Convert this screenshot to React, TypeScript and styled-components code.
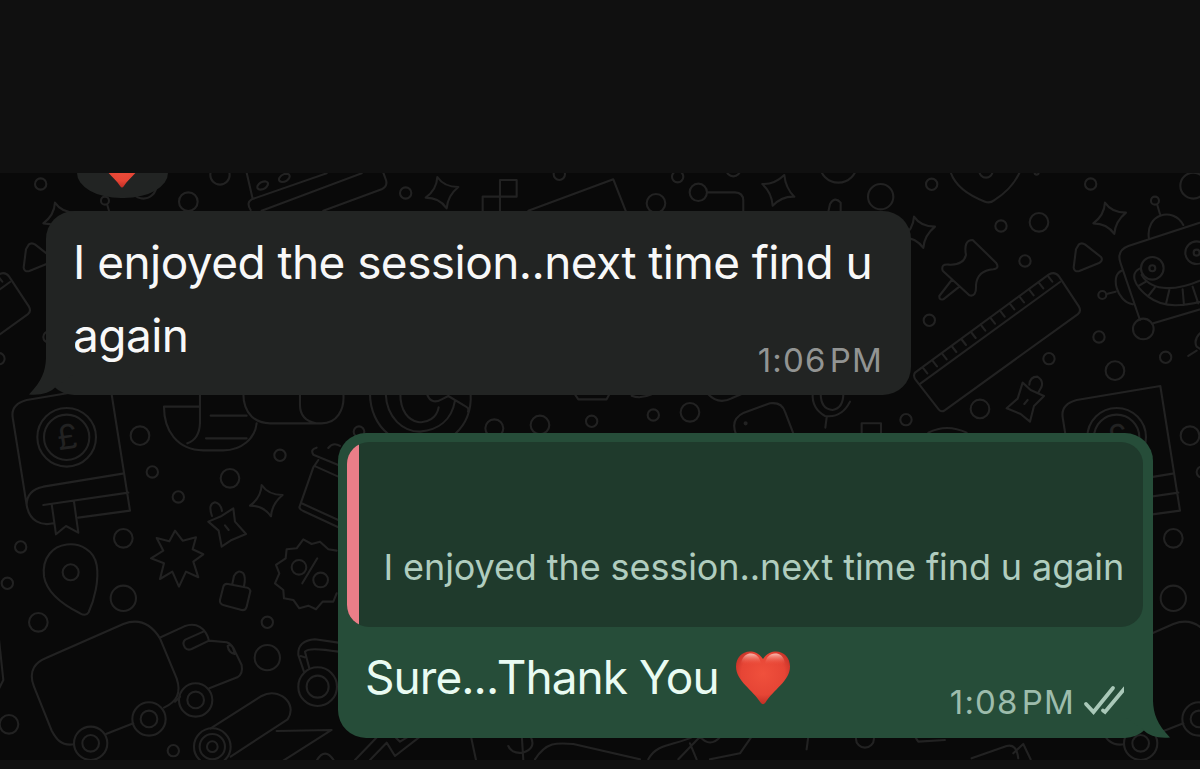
import React from "react";
import styled, { createGlobalStyle } from 'styled-components';

const GlobalStyle = createGlobalStyle`
*{
box-sizing:border-box;
}
body{
margin:0;
background:#101010;
}
`;
const Screen = styled.main`
display:flex;
flex-direction:column;
width:1200px;
height:769px;
overflow:hidden;
background:#101010;
font-family:Inter,"Liberation Sans",sans-serif;
`;
const TopBar = styled.header`
flex:none;
height:173px;
`;
const BottomBar = styled.footer`
flex:none;
height:9px;
background:#111111;
`;
const Chat = styled.section`
position:relative;
flex:1;
display:flex;
flex-direction:column;
overflow:hidden;
background:#090909;
`;
const Wallpaper = styled.svg`
position:absolute;
top:0;
left:0;
fill:none;
stroke:#222222;
stroke-linecap:round;
stroke-linejoin:round;
`;
const Reaction = styled.div`
position:relative;
display:flex;
justify-content:center;
align-items:flex-end;
width:91px;
height:25px;
margin-left:77px;
padding:0 2px 10px 0;
border-radius:0 0 44px 44px / 0 0 25px 25px;
background:#222423;
overflow:hidden;
`;
const Bubble = styled.article<{ mine?: boolean }>`
position:relative;
flex:none;
display:flex;
flex-direction:column;
align-self:${(props) => (props.mine ? 'flex-end' : 'flex-start')};
width:${(props) => (props.mine ? 815 : 865)}px;
height:${(props) => (props.mine ? 305 : 184.5)}px;
margin:${(props) => (props.mine ? '38px 47px 0 0' : '12.5px 0 0 46px')};
padding:${(props) => (props.mine ? '9px 10px 0 9px' : '15px 29px 0 27px')};
border-radius:28px;
background:${(props) => (props.mine ? '#264d39' : '#222423')};
`;
const Tail = styled.svg<{ mine?: boolean }>`
position:absolute;
bottom:0;
${(props) => (props.mine ? 'right:-17px;' : 'left:-17px;')}
fill:${(props) => (props.mine ? '#264d39' : '#222423')};
`;
const Text = styled.p<{ mine?: boolean }>`
display:flex;
align-items:center;
gap:17px;
margin:0;
color:${(props) => (props.mine ? '#e9fbf2' : '#f8f8f8')};
font-size:46px;
line-height:73px;
letter-spacing:${(props) => (props.mine ? -0.95 : -0.56)}px;
white-space:nowrap;
`;
const LastRow = styled.div<{ mine?: boolean }>`
display:flex;
justify-content:space-between;
align-items:flex-end;
height:73px;
${(props) => (props.mine ? 'margin:14px 16px 0 18px;' : '')}
`;
const Meta = styled.div<{ mine?: boolean }>`
display:flex;
align-items:center;
gap:10px;
margin-bottom:-8px;
color:${(props) => (props.mine ? '#9dbcac' : '#929493')};
font-size:33px;
line-height:40px;
`;
const Time = styled.time`
letter-spacing:1.2px;
margin-right:-1px;
white-space:nowrap;
word-spacing:-7.5px;
`;
const Checks = styled.svg`
margin-bottom:4px;
fill:none;
stroke:#a9c8b8;
stroke-width:3.8px;
stroke-linecap:round;
overflow:visible;
`;
const Quote = styled.blockquote`
display:flex;
height:185px;
margin:0;
border-radius:22px;
background:#1f3a2c;
overflow:hidden;
`;
const QuoteAccent = styled.span`
flex:none;
width:11.5px;
background:#ea7e88;
`;
const QuoteText = styled.span`
align-self:flex-end;
padding:0 0 36px 25px;
color:#b0cdbf;
font-size:36px;
line-height:48px;
letter-spacing:-0.1px;
white-space:nowrap;
`;

interface DoodleSheetI {
    x: number;
    y: number;
    lines: string[];
    circles: number[][];
}

// 4 point sparkle, leaning left or right
const sparkle = (x: number, y: number, right = false) =>
    right
        ? `M${x + 18} ${y - 47}q4 40 30 65q-36-2-65 27q-2-38-31-65q36 2 66-27z`
        : `M${x - 13} ${y - 47}q20 30 63 30q-32 26-35 64q-22-32-63-32q33-24 35-62z`;

// every sheet is drawn on a 3x grid
const sheets: DoodleSheetI[] = [
    {
        x: 0, y: 160,
        lines: [
            'M740 38L757 112M1085 40L785 152M980 40L755 118Q738 128 752 150M970 152L1145 88Q1164 78 1158 60L1150 38',
            'M773 77q6-12 22-13q12 2 8 12q-6 12-22 13q-12-2-8-12zM838 54q6-12 22-13q12 2 8 12q-6 12-22 13q-12-2-8-12z',
        ],
        circles: [[122, 72, 17], [660, 45, 29], [565, 125, 28], [430, 77, 39]],
    },
    {
        x: 400, y: 160,
        lines: [
            sparkle(125, 98), sparkle(1135, 92, true),
            'M248 155V110H350V60H300V155', 'M385 152L640 58L678 155',
            'M921 97H1005Q1030 98 1030 122V155',
        ],
        circles: [[17, 99, 17], [478, 43, 17], [768, 130, 28], [833, 50, 17], [895, 97, 26], [1000, 28, 21]],
    },
    {
        x: 800, y: 160,
        lines: [
            sparkle(355, 217), sparkle(928, 175),
            'M85 155L90 132Q104 108 122 128L122 155', 'M450 30Q465 90 555 125Q570 131 582 121Q640 85 662 30',
            // pin
            'M518 240L588 308Q600 325 580 328Q532 332 528 375Q530 412 508 406L428 332Q422 310 448 314Q490 316 498 285Q490 240 518 240zM455 360L418 408Q417 421 430 418L478 380',
            // play
            'M836 254Q845 246 856 254L903 291Q910 300 899 308L838 333Q823 337 821 323L828 268z',
            // ruler
            'M345 638L747 343Q765 333 777 349L837 440Q845 454 833 463L434 751Q424 758 416 748L346 658Q339 648 345 638zM362 670L780 366',
            'M368 622l14 18M397 601l14 18M426 580l14 18M455 558l14 18M484 537l14 18M513 516l14 18M542 494l14 18M571 473l14 18M600 452l14 18M629 430l14 18M658 409l14 18M687 388l14 18M716 367l14 18M743 347l14 18',
            // bulldog clip
            'M668 668L692 690L732 708L702 738L690 785L662 762L620 745L653 716zM688 674Q690 650 712 650Q732 662 724 682L716 696M673 732l10-12',
            'M38 700Q35 745 75 768Q125 775 150 725M62 700Q62 748 98 750Q130 745 130 700M80 772L76 803M185 818V790H243V818M385 818Q440 790 500 818',
            // robot
            'M1072 135L1080 162M1047 237C1035 160 1120 140 1150 195M1300 155L985 258Q948 272 962 310L1020 480M1060 490L1300 418M965 332C930 345 950 425 998 433M920 402L947 395',
            'M1020 325C990 340 1000 375 1045 410C1090 445 1150 442 1240 415M1025 345C1055 395 1130 400 1235 345M1038 365L1015 378M1065 382L1045 408M1108 390L1098 432M1148 388L1152 435M1178 380L1195 430',
            'M1165 588L1190 572M1200 520Q1180 540 1190 560L1210 572',
        ],
        circles: [
            [115, 12, 56], [242, 110, 38], [395, 73, 17], [558, 33, 20], [710, 38, 6], [603, 198, 17], [717, 187, 28],
            [675, 303, 17], [388, 481, 17], [897, 531, 17], [747, 596, 17], [1097, 592, 17], [945, 632, 28], [540, 747, 28],
            [318, 779, 17], [1065, 122, 12], [1030, 507, 31], [907, 405, 12], [1057, 325, 34], [1057, 325, 9], [1190, 278, 34], [1190, 278, 9],
        ],
    },
    {
        x: 0, y: 380,
        lines: [
            sparkle(798, 362),
            // book
            'M331 18L80 60Q32 73 38 112L80 375C88 425 125 438 160 430M80 375Q80 330 130 320L368 281M331 18L390 392L235 413M130 375L385 338M155 372L168 463L198 438L235 458L222 365',
            'M492 80H600M600 40V130Q598 178 562 190M492 80C492 150 530 210 610 211H670C725 211 765 175 770 130M632 107H740M618 175H740',
            'M730 40C730 105 770 130 810 130H965C1010 130 1035 90 1030 40M900 40V75Q900 120 948 130',
            // clip
            'M636 408Q623 372 645 367Q662 370 666 393M700 385L705 425L738 462L695 480L665 500L656 452L625 425L665 408zM675 436l11 14',
            'M525 452L548 482L588 472L578 508L610 523L580 545L595 592L558 575L537 620L517 575L480 597L492 550L453 535L490 512L470 474L508 484z',
            // seal
            'M1010 512L985 508L960 485L935 492L910 478L890 505L860 508L857 535L828 555L838 580L825 610L850 630L852 655L880 660L898 685L925 677L948 688L968 665L1000 665L1010 640M952 535L907 610',
            // jar
            'M950 203Q930 208 940 224L1015 255M985 204Q1000 185 1020 198M955 240L940 262L898 382Q900 390 910 393L1015 442M948 260L1015 290M905 370L1015 420',
            // place marker
            'M132 590C118 470 275 465 290 555C298 600 283 660 266 697Q258 710 240 700C180 670 140 635 132 590z',
            'M684 612L735 622Q755 625 750 638L740 680Q737 692 725 690L672 676Q658 672 660 660L670 620Q673 610 684 612zM697 612L702 588Q714 566 730 580Q738 590 732 620',
        ],
        circles: [
            [200, 172, 88], [200, 172, 68], [420, 167, 28], [457, 276, 17], [535, 351, 17], [690, 295, 28], [840, 226, 17],
            [370, 475, 28], [62, 501, 17], [212, 577, 24], [897, 562, 22], [962, 600, 22],
        ],
    },
    {
        x: 0, y: 570,
        lines: [
            // truck
            'M222 523C180 530 165 500 155 482L102 350C82 300 110 275 138 264L370 162C420 143 455 165 480 205L530 325C545 370 530 395 492 413M318 492L400 460',
            'M482 202L553 169C590 155 618 175 627 212L680 217Q697 222 707 248L725 285Q730 312 712 322L628 355M610 185L556 209Q545 218 555 233Q562 242 575 237L627 212M683 228Q698 218 704 252Q686 248 683 228M525 395L540 380',
            'M-5 190L10 330L-5 360',
            // rolled poster
            'M632 475L785 378C835 350 895 400 863 448L692 560M830 483L995 480L850 572M950 572Q975 530 1002 572',
            // cup
            'M912 305L895 255Q892 212 945 208L1015 218M928 295L915 245Q925 230 1015 245M902 258L914 262',
        ],
        circles: [
            [22, 40, 17], [370, 85, 38], [115, 157, 28], [802, 157, 17], [802, 263, 38], [27, 463, 28], [520, 542, 17],
            [272, 520, 50], [272, 520, 25], [447, 447, 50], [447, 447, 25], [587, 390, 50], [587, 390, 25],
            [953, 350, 58], [953, 350, 33], [637, 530, 55], [637, 530, 38], [637, 530, 16],
        ],
    },
    {
        x: 340, y: 380,
        lines: [
            'M90 40C90 90 110 135 145 162M392 40C395 95 375 135 345 162M137 40C140 115 190 155 240 155C295 150 335 120 345 62M181 40C180 150 285 145 296 82M262 45Q275 75 305 58L325 48L378 80Q388 85 384 95',
            'M705 43L715 58H800L808 43M875 47Q900 58 935 43M1105 43Q1135 75 1175 55L1205 42',
            'M1188 162Q1170 118 1212 98L1290 70Q1325 65 1335 95L1360 160',
        ],
        circles: [[57, 155, 16], [463, 145, 27], [600, 135, 28], [755, 124, 17], [940, 105, 17], [1050, 97, 28], [1217, 130, 3]],
    },
    {
        x: 340, y: 620,
        lines: [
            'M45 420L112 350M90 420L140 368L165 408L240 350M165 350L180 365L205 350M393 350L408 420M545 340L550 420M505 378Q515 402 548 398Q590 385 572 350M585 418C620 365 650 368 700 372L900 418M925 418C950 370 1000 378 1060 350M1015 418L1080 350M1050 370L1070 418M1080 350Q1110 385 1142 350M1110 418L1200 400L1235 350M1400 388L1405 350',
            'M1895 415L2000 378Q2030 370 2035 415M2020 400L2050 372L2072 418M1725 350L1735 365L1815 360',
        ],
        circles: [[1575, 356, 27]],
    },
];

function Doodles() {
    return (
        <Wallpaper width="1200" height="587" viewBox="0 173 1200 587">
            <g id="doodles">
                {sheets.map((sheet, i) => (
                    <g key={i} transform={`translate(${sheet.x} ${sheet.y}) scale(.3333)`} strokeWidth="6.3">
                        {sheet.lines.map((d) => <path key={d} d={d} />)}
                        {sheet.circles.map(([cx, cy, r], j) => <circle key={j} cx={cx} cy={cy} r={r} />)}
                    </g>
                ))}
                <text x="67" y="449" textAnchor="middle" fontSize="34" fill="#222222" stroke="none" transform="rotate(-8 67 437)">£</text>
            </g>
            {/* the wallpaper repeats every 1050px */}
            <use href="#doodles" x="1050" />
            <use href="#doodles" x="-1050" />
        </Wallpaper>
    );
}

const HeartSvg = styled.svg`
flex:none;
`;

function Heart({ size, id }: { size: number; id: string }) {
    return (
        <HeartSvg width={size} height={size} viewBox="0 0 54 54">
            <defs>
                <radialGradient id={id} cx="50%" cy="42%" r="62%">
                    <stop offset="0" stopColor="#f0503c" />
                    <stop offset=".65" stopColor="#e64535" />
                    <stop offset="1" stopColor="#b82a22" />
                </radialGradient>
                <linearGradient id={id + 'Shine'} x1="0" y1="0" x2="0" y2="1">
                    <stop offset="0" stopColor="#ffd9d0" stopOpacity=".8" />
                    <stop offset=".8" stopColor="#f0503c" stopOpacity="0" />
                </linearGradient>
            </defs>
            <path fill={`url(#${id})`} d="M27 8C31 2 36 .5 40 .5C48 .5 54 7 54 15.500C54 30 37 39 29.500 51.500Q27 55 24.500 51.500C17 39 0 30 0 15.500C0 7 6 .5 14 .5C18 .5 23 2 27 8z" />
            <path fill={`url(#${id}Shine)`} d="M5 13C6 5 11 2.500 15 2.500C20 2.500 24 6 25 13C20 17 10 18 5 13zM29 13C30 6 34 2.500 39 2.500C44 2.500 48 5 49 13C44 18 34 17 29 13z" />
        </HeartSvg>
    );
}

export default function App() {
    return (
        <Screen>
            <GlobalStyle />
            <TopBar />
            <Chat>
                <Doodles />
                <Reaction><Heart size={38} id="reaction" /></Reaction>
                <Bubble>
                    <Tail width="46" height="52" viewBox="0 0 46 52">
                        <path d="M17 0V15C16.500 28 13 38 0 51.500C12 52.500 21 50 27 43.500L46 30V0z" />
                    </Tail>
                    <Text>I enjoyed the session..next time find u</Text>
                    <LastRow>
                        <Text>again</Text>
                        <Meta><Time>1:06 PM</Time></Meta>
                    </LastRow>
                </Bubble>
                <Bubble mine>
                    <Tail mine width="46" height="52" viewBox="0 0 46 52">
                        <path d="M29 0V15C29.500 28 33 38 46 51.500C34 52.500 25 50 19 43.500L0 30V0z" />
                    </Tail>
                    <Quote>
                        <QuoteAccent />
                        <QuoteText>I enjoyed the session..next time find u again</QuoteText>
                    </Quote>
                    <LastRow mine>
                        <Text mine>Sure...Thank You <Heart size={54} id="heart" /></Text>
                        <Meta mine>
                            <Time>1:08 PM</Time>
                            <Checks width="43" height="29" viewBox="0 0 43 29">
                                <path d="M2 18L9.500 26L29 2M19 24.500L21 26L41 2" />
                            </Checks>
                        </Meta>
                    </LastRow>
                </Bubble>
            </Chat>
            <BottomBar />
        </Screen>
    );
}
